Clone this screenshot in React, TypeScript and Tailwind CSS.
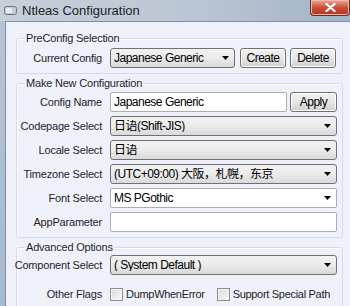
import React from 'react';

const uiFont = {
    fontFamily: '"Liberation Sans", "Noto Sans CJK SC", sans-serif',
};

function Arrow() {
    return (
        <svg width="7" height="4" viewBox="0 0 7 4" className="shrink-0">
            <path d="M0 0 H7 L3.5 4 Z" fill="#000" />
        </svg>
    );
}

function Combo({ value, editable, className }: { value: string; editable?: boolean; className?: string }) {
    const face = editable
        ? 'bg-white border-[#abadb3] rounded-[2px]'
        : 'bg-gradient-to-b from-[#f2f2f2] via-[#ebebeb] to-[#d9d9d9] border-[#707070] rounded-[3px]';
    return (
        <div className={`flex items-center h-[20px] border pl-[3px] pr-[5px] ${face} ${className ?? ''}`}>
            <span className="flex-1 truncate text-[12px] tracking-[-0.5px] leading-none text-black">{value}</span>
            <Arrow />
        </div>
    );
}

function TextBox({ value, className }: { value: string; className?: string }) {
    return (
        <div className={`flex items-center h-[20px] bg-white border border-[#abadb3] rounded-[2px] px-[3px] ${className ?? ''}`}>
            <span className="whitespace-nowrap text-[12px] tracking-[-0.5px] leading-none text-black">{value}</span>
        </div>
    );
}

function Button({ label, className }: { label: string; className?: string }) {
    return (
        <div
            className={`flex items-center justify-center h-[20px] border border-[#707070] rounded-[3px] bg-gradient-to-b from-[#f2f2f2] via-[#e6e6e6] to-[#d0d0d0] shadow-[inset_0_0_0_1px_#fcfcfc] text-[12px] tracking-[-0.5px] text-black ${className ?? ''}`}
        >
            {label}
        </div>
    );
}

function Row({ label, children }: { label: string; children: React.ReactNode }) {
    return (
        <div className="flex items-center h-[20px]">
            <div className="w-[85px] shrink-0 flex justify-end">
                <span className="whitespace-nowrap text-[11px] tracking-[-0.2px] leading-none text-[#1e1e1e]">{label}</span>
            </div>
            <div className="flex flex-1 items-center ml-[8px] min-w-0">{children}</div>
        </div>
    );
}

function Group({ title, className, children }: { title: string; className?: string; children: React.ReactNode }) {
    return (
        <fieldset
            className={`border border-[#d5dbe6] rounded-[3px] shadow-[inset_1px_1px_0_#ffffff] pr-[5px] ${className ?? ''}`}
        >
            <legend className="ml-[8px] px-[1px] whitespace-nowrap text-[11px] tracking-[-0.2px] leading-[14px] text-[#1e1e1e]">
                {title}
            </legend>
            {children}
        </fieldset>
    );
}

function CheckBox({ label }: { label: string }) {
    return (
        <div className="flex items-center shrink-0">
            <div className="w-[13px] h-[13px] border border-[#8f8f8f] bg-gradient-to-br from-[#dcdcdc] to-[#f6f6f6] shadow-[inset_0_0_0_1px_#f4f4f4]" />
            <span className="ml-[3px] whitespace-nowrap text-[11px] tracking-[-0.3px] leading-none text-[#1e1e1e]">{label}</span>
        </div>
    );
}

export default function App() {
    return (
        <div
            className="w-[350px] h-[306px] overflow-hidden flex flex-col bg-gradient-to-b from-[#b7c4d5] to-[#a7b9cf]"
            style={uiFont}
        >
            <div className="flex items-start h-[21px] shrink-0 bg-gradient-to-r from-[#c6cfda] via-[#bcc7d4] to-[#a3b4c8]">
                <div className="flex items-center mt-[4px] ml-[4px]">
                    <svg width="13" height="11" viewBox="0 0 13 11">
                        <rect x="0.5" y="1.5" width="12" height="8" rx="2" fill="#c8ccd2" stroke="#6d7480" />
                        <rect x="2" y="3" width="6" height="5" rx="1" fill="#e9ebee" />
                    </svg>
                    <span className="ml-[5px] text-[13px] leading-none text-[#1b1f26]">Ntleas Configuration</span>
                </div>
                <div className="ml-auto flex items-center justify-center w-[40px] h-[16px] rounded-b-[4px] border border-t-0 border-[#6b2b20] bg-gradient-to-b from-[#e9a99c] via-[#c7503a] to-[#b8321c] shadow-[inset_0_0_0_1px_#f0b8a8]">
                    <svg width="11" height="9" viewBox="0 0 11 9">
                        <path d="M1.5 1 L9.5 8 M9.5 1 L1.5 8" stroke="#ffffff" strokeWidth="2.2" strokeLinecap="round" />
                    </svg>
                </div>
            </div>
            <div className="flex-1 ml-[5px] border-l border-t border-[#7f8ea3] bg-[#eef0fa] pl-[10px] pr-[7px] pt-[9px]">
                <Group title="PreConfig Selection" className="pt-[3px] pb-[5px]">
                    <Row label="Current Config">
                        <Combo value="Japanese Generic" className="w-[125px]" />
                        <Button label="Create" className="w-[46px] ml-[5px]" />
                        <Button label="Delete" className="w-[46px] ml-[4px]" />
                    </Row>
                </Group>
                <Group title="Make New Configuration" className="mt-[2px] pt-[2px] pb-[5px]">
                    <div className="flex flex-col gap-[4px]">
                        <Row label="Config Name">
                            <TextBox value="Japanese Generic" className="w-[177px]" />
                            <Button label="Apply" className="w-[47px] ml-[3px] h-[19px]" />
                        </Row>
                        <Row label="Codepage Select">
                            <Combo value="日语(Shift-JIS)" className="flex-1" />
                        </Row>
                        <Row label="Locale Select">
                            <Combo value="日语" className="flex-1" />
                        </Row>
                        <Row label="Timezone Select">
                            <Combo value="(UTC+09:00) 大阪，札幌，东京" className="flex-1" />
                        </Row>
                        <Row label="Font Select">
                            <Combo value="MS PGothic" editable className="flex-1" />
                        </Row>
                        <Row label="AppParameter">
                            <TextBox value="" className="flex-1" />
                        </Row>
                    </div>
                </Group>
                <Group title="Advanced Options" className="mt-[2px] pt-[1px] pb-[8px]">
                    <Row label="Component Select">
                        <Combo value="( System Default )" className="flex-1" />
                    </Row>
                    <div className="mt-[9px]">
                        <Row label="Other Flags">
                            <CheckBox label="DumpWhenError" />
                            <div className="ml-[12px]">
                                <CheckBox label="Support Special Path" />
                            </div>
                        </Row>
                    </div>
                </Group>
            </div>
        </div>
    );
}
